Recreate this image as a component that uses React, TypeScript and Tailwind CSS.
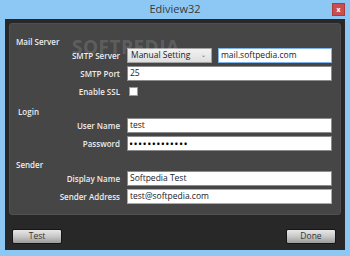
import type { ReactNode } from "react";

// Ediview32 settings dialog — dark Win8-style window with blue frame.

const font = { fontFamily: '"Open Sans", "Noto Sans", sans-serif' };

function Row({ label, children }: { label: string; children: ReactNode }) {
  return (
    <div className="flex h-[15px] items-center">
      <div className="w-[111px] pr-[1px] text-right text-[8px] font-semibold text-[#ececec]">
        {label}
      </div>
      <div className="ml-[6px] flex h-full flex-1 items-center gap-[6px]">
        {children}
      </div>
    </div>
  );
}

function TextBox({ value, focus }: { value: string; focus?: boolean }) {
  return (
    <div
      className={`flex h-full flex-1 items-center border bg-white pl-[2px] text-[8.5px] text-[#1a1a1a] ${
        focus ? "border-[#7eb4ea]" : "border-[#8c8c8c]"
      }`}
    >
      {value}
    </div>
  );
}

function Header({ children }: { children: ReactNode }) {
  return (
    <div className="flex h-[13px] items-center pl-[6px] text-[8px] font-semibold text-[#ececec]">
      {children}
    </div>
  );
}

function Button({ children }: { children: ReactNode }) {
  return (
    <button
      type="button"
      className="flex h-[15px] w-[50px] items-center justify-center rounded-[2px] border border-[#151515] bg-gradient-to-b from-[#e8e8e8] via-[#c8c8c8] to-[#9c9c9c] text-[8.5px] text-[#333]"
    >
      {children}
    </button>
  );
}

export default function App() {
  return (
    <div
      className="flex h-[256px] w-[350px] flex-col bg-[#8dc7f3]"
      style={font}
    >
      <div className="relative flex h-[19px] items-center justify-center">
        <span className="text-[11px] text-[#3a3a3a]">Ediview32</span>
        <div className="absolute right-[5px] top-[3px] flex h-[13px] w-[13px] items-center justify-center border border-[#b03a3a] bg-[#cb4e4f] text-[7px] font-bold leading-none text-white">
          x
        </div>
      </div>

      <div className="mx-[5px] mb-[6px] flex flex-1 flex-col bg-[#282828] pl-[4px] pt-[4px]">
        <div className="relative mr-[4px] flex h-[192px] flex-col rounded-[3px] border border-[#505050] bg-[#464646] pr-[8px] pt-[11px]">
          <span className="pointer-events-none absolute left-[62px] top-[14px] text-[19px] font-bold leading-none tracking-[0.5px] text-white/15">
            SOFTPEDIA
          </span>

          <Header>Mail Server</Header>
          <Row label="SMTP Server">
            <div className="flex h-full w-[85px] items-center justify-between border border-[#a3a3a3] bg-gradient-to-b from-[#f2f2f2] to-[#dedede] pl-[3px] pr-[5px] text-[8.5px] text-[#1a1a1a]">
              <span>Manual Setting</span>
              <span className="text-[6px] text-[#666]">⌄</span>
            </div>
            <TextBox value="mail.softpedia.com" focus />
          </Row>
          <div className="mt-[3px]">
            <Row label="SMTP Port">
              <TextBox value="25" />
            </Row>
          </div>
          <div className="mt-[3px]">
            <Row label="Enable SSL">
              <div className="ml-[2px] h-[9px] w-[9px] border border-[#9a9a9a] bg-white" />
            </Row>
          </div>

          <div className="mt-[6px]">
            <Header>
              <span className="pl-[2px]">Login</span>
            </Header>
          </div>
          <Row label="User Name">
            <TextBox value="test" />
          </Row>
          <div className="mt-[3px]">
            <Row label="Password">
              <div className="flex h-full flex-1 items-center border border-[#8c8c8c] bg-white pl-[1px] text-[11px] leading-none tracking-[0.4px] text-black">
                •••••••••••••
              </div>
            </Row>
          </div>

          <div className="mt-[7px]">
            <Header>Sender</Header>
          </div>
          <Row label="Display Name">
            <TextBox value="Softpedia Test" />
          </Row>
          <div className="mt-[3px]">
            <Row label="Sender Address">
              <TextBox value="test@softpedia.com" focus />
            </Row>
          </div>
        </div>

        <div className="mt-[14px] flex items-center justify-between pl-[3px] pr-[9px]">
          <Button>Test</Button>
          <Button>Done</Button>
        </div>
      </div>
    </div>
  );
}
